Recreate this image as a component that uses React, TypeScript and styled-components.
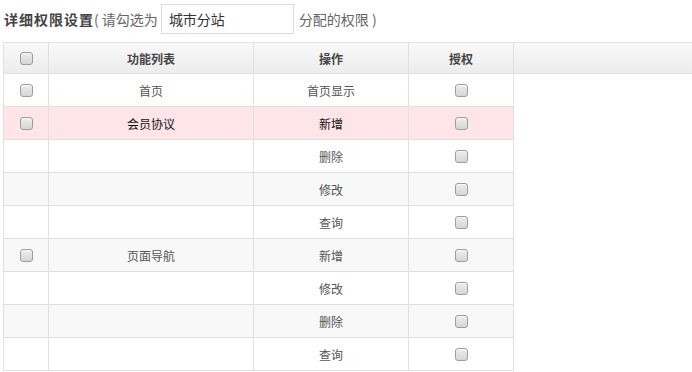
import React from "react";
import styled, { createGlobalStyle } from "styled-components";

const Global = createGlobalStyle`
  html, body { margin: 0; padding: 0; background: #fff; overflow: hidden; }
  body { font-family: "Microsoft YaHei", "Noto Sans CJK SC", "Liberation Sans", sans-serif; color: #555; }
`;

const Page = styled.div`
  padding: 4px 0 0 3px;
  overflow: hidden;
`;

const TitleRow = styled.div`
  display: flex;
  align-items: center;
  height: 30px;
  font-size: 14px;
  color: #666;
`;

const Title = styled.span`
  font-weight: bold;
  color: #444;
  letter-spacing: 1px;
  margin-left: 1px;
`;

const Hint = styled.span`
  color: #666;
  white-space: pre;
`;

const SiteInput = styled.input`
  box-sizing: border-box;
  width: 133px;
  height: 30px;
  margin: 0 5px 0 3px;
  padding: 0 7px;
  border: 1px solid #ddd;
  font-family: inherit;
  font-size: 14px;
  color: #333;
  outline: none;
`;

const Table = styled.div`
  margin-top: 8px;
  border-top: 1px solid #e2e2e2;
  border-left: 1px solid #e2e2e2;
  width: 760px;
`;

const cols = "45px 205px 155px 105px";

const HeadRow = styled.div`
  display: grid;
  grid-template-columns: ${cols} 1fr;
  background: linear-gradient(#f9f9f9, #ececec);
`;

const HeadCell = styled.div`
  height: 30px;
  border-right: 1px solid #e0e0e0;
  border-bottom: 1px solid #e0e0e0;
  display: flex;
  align-items: center;
  justify-content: center;
  font-size: 12px;
  font-weight: bold;
  color: #444;
`;

const BodyRow = styled.div<{ $bg: string; $dark?: boolean }>`
  display: grid;
  grid-template-columns: ${cols};
  width: 510px;
  background: ${(p) => p.$bg};
  color: ${(p) => (p.$dark ? "#111" : "#555")};
`;

const Cell = styled.div`
  height: 32px;
  border-right: 1px solid #e0e0e0;
  border-bottom: 1px solid #e0e0e0;
  display: flex;
  align-items: center;
  justify-content: center;
  font-size: 12px;
`;

const Check = styled.span`
  box-sizing: border-box;
  display: inline-block;
  width: 13px;
  height: 13px;
  border: 1px solid #9d9d9d;
  border-radius: 3px;
  background: linear-gradient(#ededed, #d6d6d6);
  box-shadow: inset 0 1px 0 #f8f8f8;
`;

type Row = { name?: string; op: string };

const rows: Row[] = [
  { name: "首页", op: "首页显示" },
  { name: "会员协议", op: "新增" },
  { op: "删除" },
  { op: "修改" },
  { op: "查询" },
  { name: "页面导航", op: "新增" },
  { op: "修改" },
  { op: "删除" },
  { op: "查询" },
];

export default function App() {
  return (
    <>
      <Global />
      <Page>
        <TitleRow>
          <Title>详细权限设置</Title>
          <Hint>( 请勾选为</Hint>
          <SiteInput defaultValue="城市分站" />
          <Hint>分配的权限 )</Hint>
        </TitleRow>
        <Table>
          <HeadRow>
            <HeadCell>
              <Check />
            </HeadCell>
            <HeadCell>功能列表</HeadCell>
            <HeadCell>操作</HeadCell>
            <HeadCell>授权</HeadCell>
            <HeadCell />
          </HeadRow>
          {rows.map((r, i) => {
            const hover = i === 1;
            const bg = hover ? "#ffe4e8" : i % 2 === 1 ? "#f8f8f8" : "#fff";
            return (
              <BodyRow key={i} $bg={bg} $dark={hover}>
                <Cell>{r.name ? <Check /> : null}</Cell>
                <Cell>{r.name ?? ""}</Cell>
                <Cell>{r.op}</Cell>
                <Cell>
                  <Check />
                </Cell>
              </BodyRow>
            );
          })}
        </Table>
      </Page>
    </>
  );
}
